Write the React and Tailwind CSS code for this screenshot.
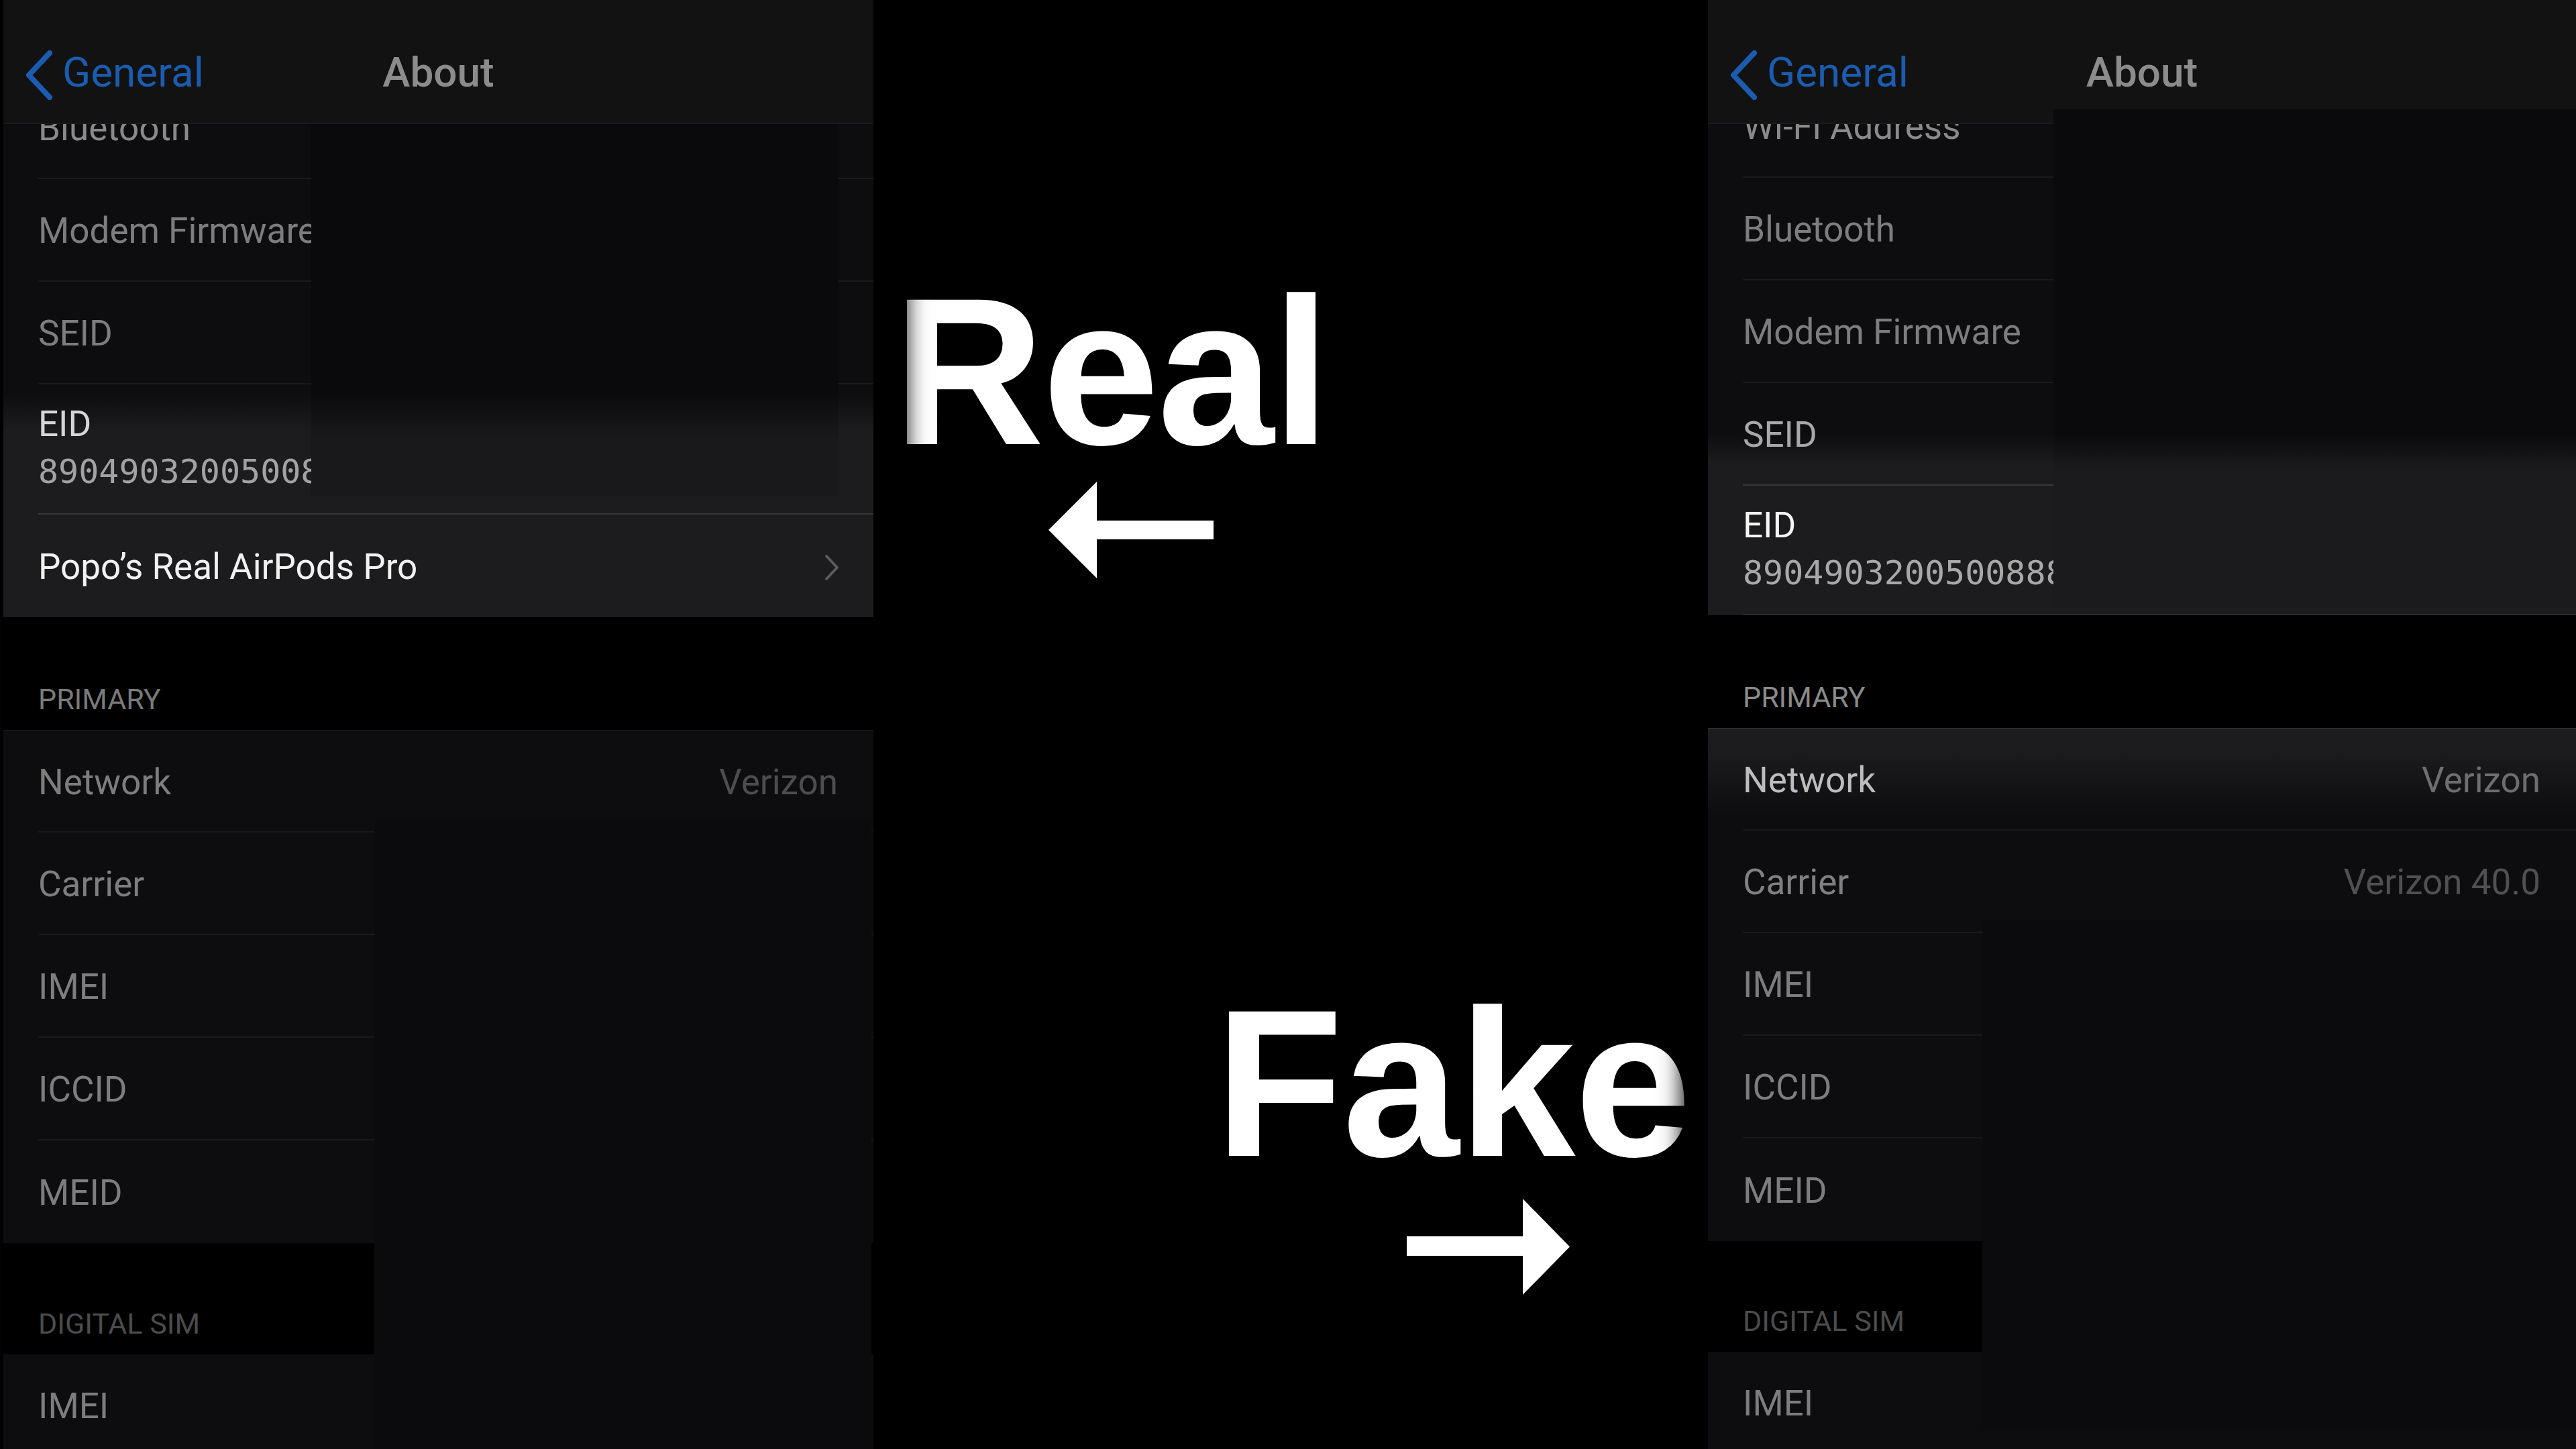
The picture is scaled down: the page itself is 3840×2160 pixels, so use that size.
import React from "react";

const SANS = "font-['Roboto','Noto_Sans',sans-serif]";

function Row({
  label,
  value,
  h = "h-[153px]",
  bg = "bg-[#0d0d10]",
  sep = "border-[#19191d]",
  labelC = "text-[#7d7d7d]",
  valueC = "text-[#4d4d4d]",
  last = false,
  chevron = false,
  top = "",
}) {
  return (
    <div className={`${h} ${bg} ${top} pl-[52px] flex shrink-0`}>
      <div
        className={`flex-1 flex items-center justify-between pr-[53px] pt-[4px] ${
          last ? "" : "border-b-2 " + sep
        }`}
      >
        <span className={`text-[53px] leading-none whitespace-nowrap ${labelC}`}>{label}</span>
        {value ? (
          <span className={`text-[53px] leading-none whitespace-nowrap ${valueC}`}>{value}</span>
        ) : null}
        {chevron ? (
          <svg width="26" height="40" viewBox="0 0 26 40" className="-mr-[4px]">
            <path
              d="M5 3 L21 20 L5 37"
              stroke="#5b5b60"
              strokeWidth="4"
              fill="none"
              strokeLinecap="round"
              strokeLinejoin="round"
            />
          </svg>
        ) : null}
      </div>
    </div>
  );
}

function EidRow({ h, bg, sep, labelC, numC, num }) {
  return (
    <div className={`${h} ${bg} pl-[52px] flex shrink-0`}>
      <div className={`flex-1 flex flex-col pt-[33px] border-b-2 ${sep} overflow-hidden`}>
        <span className={`text-[53px] leading-none ${labelC}`}>EID</span>
        <span
          className={`mt-[19px] text-[50px] leading-none whitespace-nowrap font-['DejaVu_Sans_Mono',monospace] ${numC}`}
        >
          {num}
        </span>
      </div>
    </div>
  );
}

function Header({ text, h, color }) {
  return (
    <div className={`${h} bg-black pl-[52px] flex items-end pb-[24px] shrink-0`}>
      <span className={`text-[43px] leading-none ${color}`}>{text}</span>
    </div>
  );
}

function NavBar() {
  return (
    <div className="absolute top-0 left-0 right-0 h-[185px] bg-[#121212] border-b-2 border-[#1b1b1c]">
      <div className="flex items-start pl-[31px] pt-[75px]">
        <svg width="44" height="74" viewBox="0 0 44 74">
          <path
            d="M38 4 L7 37 L38 70"
            stroke="#1b5cb0"
            strokeWidth="8"
            fill="none"
            strokeLinecap="round"
            strokeLinejoin="round"
          />
        </svg>
        <span className="ml-[13px] mt-[2px] text-[62px] leading-none text-[#1b5cb0]">General</span>
      </div>
      <div className="absolute inset-x-0 top-[77px] text-center text-[62px] leading-none font-medium text-[#8c8c8c]">
        About
      </div>
    </div>
  );
}

function LeftPanel() {
  return (
    <div
      className={`relative z-10 w-[1297px] h-full overflow-hidden bg-black flex flex-col pt-[114px] shadow-[20px_0_30px_30px_rgba(0,0,0,0.9)] ${SANS}`}
    >
      <Row label="Bluetooth" labelC="text-[#8a8a8a]" />
      <Row label="Modem Firmware" />
      <Row label="SEID" />
      <EidRow
        h="h-[194px]"
        bg="bg-[linear-gradient(to_bottom,#0d0d10_7%,#1c1c1e_36%)]"
        sep="border-[#38383b]"
        labelC="text-[#d6d6d6]"
        numC="text-[#a2a2a2]"
        num="89049032005008882600000012345678"
      />
      <Row
        label="Popo’s Real AirPods Pro"
        bg="bg-[#1c1c1e]"
        labelC="text-[#f2f2f2]"
        last
        chevron
      />
      <Header text="PRIMARY" h="h-[168px]" color="text-[#7a7a7a]" />
      <Row label="Network" value="Verizon" top="border-t-2 border-[#16161a]" h="h-[153px]" />
      <Row label="Carrier" />
      <Row label="IMEI" />
      <Row label="ICCID" />
      <Row label="MEID" last />
      <Header text="DIGITAL SIM" h="h-[166px]" color="text-[#4c4c4c]" />
      <Row label="IMEI" />

      <NavBar />

      <div className="absolute left-[459px] top-[185px] w-[785px] h-[555px] bg-[linear-gradient(to_bottom,#0a0a0d_72%,#19191c_84%)]" />
      <div className="absolute left-[553px] top-[1227px] w-[741px] bottom-0 bg-[#0b0b0e]" />
    </div>
  );
}

function RightPanel() {
  return (
    <div
      className={`relative z-10 w-[1294px] h-full overflow-hidden bg-black flex flex-col pt-[112px] shadow-[-20px_0_30px_20px_rgba(0,0,0,0.9)] ${SANS}`}
    >
      <Row label="Wi-Fi Address" labelC="text-[#8a8a8a]" />
      <Row label="Bluetooth" />
      <Row label="Modem Firmware" />
      <Row
        label="SEID"
        bg="bg-[linear-gradient(to_bottom,#0d0d10_50%,#1c1c1e_78%)]"
        sep="border-[#38383b]"
        labelC="text-[#a8a8a8]"
      />
      <EidRow
        h="h-[193px]"
        bg="bg-[#1c1c1e]"
        sep="border-[#2a2a2d]"
        labelC="text-[#f5f5f5]"
        numC="text-[#a8a8a8]"
        num="89049032005008882600000012345678"
      />
      <Header text="PRIMARY" h="h-[168px]" color="text-[#8a8a8a]" />
      <Row
        label="Network"
        value="Verizon"
        top="border-t-2 border-[#2e2e31]"
        bg="bg-[linear-gradient(to_bottom,#1c1c1e_20%,#0d0d10_85%)]"
        labelC="text-[#bdbdbd]"
        valueC="text-[#6e6e6e]"
      />
      <Row label="Carrier" value="Verizon 40.0" labelC="text-[#808080]" valueC="text-[#505050]" />
      <Row label="IMEI" />
      <Row label="ICCID" />
      <Row label="MEID" last />
      <Header text="DIGITAL SIM" h="h-[165px]" color="text-[#4c4c4c]" />
      <Row label="IMEI" />

      <NavBar />

      <div className="absolute left-[515px] right-0 top-[163px] h-[744px] bg-[linear-gradient(to_bottom,#0a0a0d_65%,#1b1b1e_72%)]" />
      <div className="absolute left-[409px] right-0 top-[1371px] h-[756px] bg-[#0b0b0e]" />
    </div>
  );
}

function Middle() {
  return (
    <div className="relative z-0 w-[1244px] h-full bg-black flex flex-col font-['Liberation_Sans',Arial,sans-serif] font-bold text-white">
      <div className="mt-[397px] ml-[29px] text-[313px] leading-none tracking-[-3px]">Real</div>
      <svg className="mt-[8px] ml-[261px] shrink-0" width="246" height="144" viewBox="0 0 246 144">
        <polygon points="0,72 72,0 72,58 246,58 246,86 72,86 72,144" fill="#ffffff" />
      </svg>
      <div className="mt-[596px] ml-[509px] text-[313px] leading-none tracking-[-1px]">Fake</div>
      <svg className="mt-[16px] ml-[795px] shrink-0" width="243" height="143" viewBox="0 0 243 143">
        <polygon points="0,56 173,56 173,0 243,71.5 173,143 173,85 0,85" fill="#ffffff" />
      </svg>
    </div>
  );
}

export default function App() {
  return (
    <div className="w-[3840px] h-[2160px] bg-black flex overflow-hidden">
      <div className="w-[5px] h-full bg-[#050505] shrink-0" />
      <LeftPanel />
      <Middle />
      <RightPanel />
    </div>
  );
}
